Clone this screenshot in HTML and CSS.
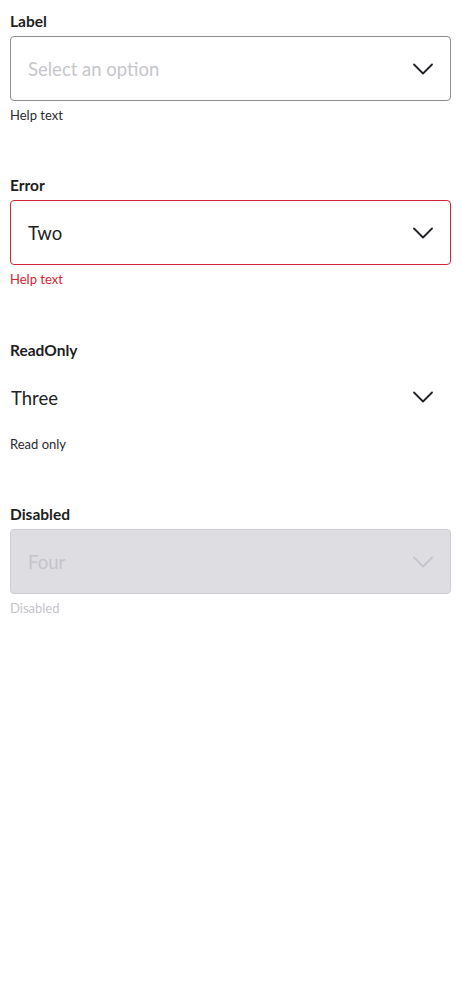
FILE: index.html
```html
<!DOCTYPE html>
<html lang="en">
<head>
<meta charset="utf-8">
<title>Select fields</title>
<link rel="stylesheet" href="styles.css">
</head>
<body>
<main class="page">
  <div class="field">
    <div class="label">Label</div>
    <div class="select">
      <span class="value placeholder">Select an option</span>
      <svg class="chev" width="20" height="12" viewBox="0 0 20 12"><path d="M1 1.5 L10 10.5 L19 1.5" fill="none" stroke="currentColor" stroke-width="1.8" stroke-linecap="round" stroke-linejoin="round"/></svg>
    </div>
    <div class="help">Help text</div>
  </div>
  <div class="field error">
    <div class="label">Error</div>
    <div class="select">
      <span class="value">Two</span>
      <svg class="chev" width="20" height="12" viewBox="0 0 20 12"><path d="M1 1.5 L10 10.5 L19 1.5" fill="none" stroke="currentColor" stroke-width="1.8" stroke-linecap="round" stroke-linejoin="round"/></svg>
    </div>
    <div class="help">Help text</div>
  </div>
  <div class="field readonly">
    <div class="label">ReadOnly</div>
    <div class="select">
      <span class="value">Three</span>
      <svg class="chev" width="20" height="12" viewBox="0 0 20 12"><path d="M1 1.5 L10 10.5 L19 1.5" fill="none" stroke="currentColor" stroke-width="1.8" stroke-linecap="round" stroke-linejoin="round"/></svg>
    </div>
    <div class="help">Read only</div>
  </div>
  <div class="field disabled">
    <div class="label">Disabled</div>
    <div class="select">
      <span class="value">Four</span>
      <svg class="chev" width="20" height="12" viewBox="0 0 20 12"><path d="M1 1.5 L10 10.5 L19 1.5" fill="none" stroke="currentColor" stroke-width="1.8" stroke-linecap="round" stroke-linejoin="round"/></svg>
    </div>
    <div class="help">Disabled</div>
  </div>
</main>
</body>
</html>
```
FILE: styles.css
```css
html, body {
  margin: 0;
  padding: 0;
  background: #ffffff;
}
body {
  font-family: Lato, "Open Sans", "Liberation Sans", sans-serif;
  color: #222226;
}
.page {
  padding: 11px 10px 0 10px;
  display: flex;
  flex-direction: column;
  gap: 52.4px;
}
.field {
  display: flex;
  flex-direction: column;
}
.label {
  font-size: 15.5px;
  font-weight: 700;
  line-height: 20px;
  color: #1e1e22;
  margin-bottom: 5px;
}
.select {
  box-sizing: border-box;
  height: 65px;
  border: 1px solid #8c8c93;
  border-radius: 4px;
  display: flex;
  align-items: center;
  justify-content: space-between;
  padding: 0 17px 0 17px;
  background: #ffffff;
}
.value {
  font-size: 18.5px;
  color: #222226;
  padding-top: 1px;
}
.placeholder {
  color: #c6c6cb;
}
.chev {
  color: #222226;
  display: block;
}
.help {
  margin-top: 6px;
  font-size: 13px;
  line-height: 16px;
  color: #2a2a2e;
}
.error .select {
  border-color: #d42531;
}
.error .help {
  color: #d42531;
}
.readonly .select {
  border-color: transparent;
  padding-left: 0;
}
.disabled .select {
  background: #dedde2;
  border-color: #cfced4;
}
.disabled .value {
  color: #c5c4ca;
}
.disabled .chev {
  color: #c5c4ca;
}
.disabled .help {
  color: #c5c4ca;
}
```
